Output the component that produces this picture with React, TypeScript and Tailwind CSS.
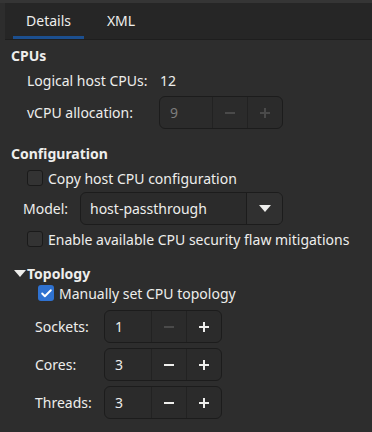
import { Check } from "lucide-react";

function SpinBox({ value, width, minusOff, disabled }: { value: string; width: string; minusOff?: boolean; disabled?: boolean }) {
  return (
    <div className={`flex h-[33px] rounded-[6px] border border-[#1c1c1c] bg-[#2b2b2b] ${width}`}>
      <div className={`flex flex-1 items-center pl-[10px] ${disabled ? "text-[#7d7d7d]" : "text-[#eeeeec]"}`}>{value}</div>
      <div className="flex w-[35px] items-center justify-center border-l border-[#222222]">
        <span className={`block h-[2px] w-[10px] ${disabled || minusOff ? "bg-[#4a4a4a]" : "bg-[#eeeeec]"}`} />
      </div>
      <div className="flex w-[35px] items-center justify-center border-l border-[#222222]">
        <span className="relative block h-[10px] w-[10px]">
          <span className={`absolute left-0 top-[4px] h-[2px] w-[10px] ${disabled ? "bg-[#4a4a4a]" : "bg-[#eeeeec]"}`} />
          <span className={`absolute left-[4px] top-0 h-[10px] w-[2px] ${disabled ? "bg-[#4a4a4a]" : "bg-[#eeeeec]"}`} />
        </span>
      </div>
    </div>
  );
}

function CheckBox({ checked }: { checked?: boolean }) {
  return checked ? (
    <span className="flex h-[16px] w-[16px] items-center justify-center rounded-[3px] bg-[#2f72d1]">
      <Check size={13} strokeWidth={3.5} color="#ffffff" />
    </span>
  ) : (
    <span className="block h-[16px] w-[16px] rounded-[3px] border border-[#1a1a1a] bg-[#333333]" />
  );
}

export default function App() {
  return (
    <div className="h-[432px] w-[372px] overflow-hidden bg-[#2d2d2d] text-[14px] text-[#eeeeec]" style={{ fontFamily: '"Noto Sans", sans-serif' }}>
      {/* top strip */}
      <div className="h-[3px] bg-[#353535]" />
      {/* tabs */}
      <div className="ml-[5px] flex h-[37px] border-b border-[#1e1e1e] bg-[#262626]">
        <div className="relative ml-[8px] flex w-[71px] items-center justify-center pb-[2px]">
          Details
          <span className="absolute bottom-0 left-0 h-[3px] w-full bg-[#1c4f8f]" />
        </div>
        <div className="ml-[6px] flex w-[62px] items-center justify-center pb-[2px]">XML</div>
      </div>

      <div className="flex flex-col pl-[11px]">
        <div className="mt-[7px] h-[18px] font-bold leading-[18px]">CPUs</div>

        <div className="ml-[16px] mt-[6px] flex h-[18px] items-center">
          <span className="w-[133px]">Logical host CPUs:</span>
          <span>12</span>
        </div>

        <div className="ml-[16px] mt-[7px] flex items-center">
          <span className="w-[132px]">vCPU allocation:</span>
          <SpinBox value="9" width="w-[124px]" disabled />
        </div>

        <div className="mt-[16px] h-[18px] font-bold leading-[18px]">Configuration</div>

        <div className="ml-[16px] mt-[7px] flex h-[16px] items-center gap-[5px]">
          <CheckBox />
          <span>Copy host CPU configuration</span>
        </div>

        <div className="ml-[12px] mt-[6px] flex items-center">
          <span className="w-[57px]">Model:</span>
          <div className="flex h-[33px] w-[203px] rounded-[6px] border border-[#1c1c1c] bg-[#2b2b2b]">
            <div className="flex flex-1 items-center pl-[9px]">host-passthrough</div>
            <div className="flex w-[36px] items-center justify-center rounded-r-[5px] border-l border-[#1c1c1c] bg-[#303030]">
              <svg width="12" height="7" viewBox="0 0 12 7">
                <path d="M0 0 L12 0 L6 7 Z" fill="#eeeeec" />
              </svg>
            </div>
          </div>
        </div>

        <div className="ml-[16px] mt-[6px] flex h-[16px] items-center gap-[5px]">
          <CheckBox />
          <span>Enable available CPU security flaw mitigations</span>
        </div>

        <div className="mt-[17px] flex h-[18px] items-center font-bold">
          <svg width="12" height="7" viewBox="0 0 12 7" className="ml-[3px] mr-[1px]">
            <path d="M0 0 L12 0 L6 7 Z" fill="#eeeeec" />
          </svg>
          Topology
        </div>

        <div className="ml-[27px] mt-[3px] flex h-[16px] items-center gap-[5px]">
          <CheckBox checked />
          <span>Manually set CPU topology</span>
        </div>

        <div className="ml-[24px] mt-[9px] flex flex-col gap-[5px]">
          <div className="flex items-center">
            <span className="w-[69px]">Sockets:</span>
            <SpinBox value="1" width="w-[118px]" minusOff />
          </div>
          <div className="flex items-center">
            <span className="w-[69px]">Cores:</span>
            <SpinBox value="3" width="w-[118px]" />
          </div>
          <div className="flex items-center">
            <span className="w-[69px]">Threads:</span>
            <SpinBox value="3" width="w-[118px]" />
          </div>
        </div>
      </div>
    </div>
  );
}
